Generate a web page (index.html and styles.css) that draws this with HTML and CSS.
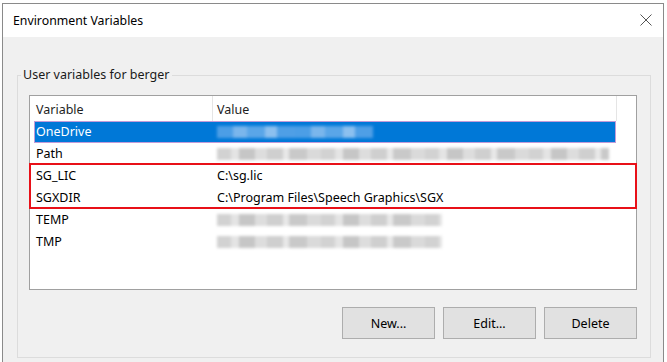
FILE: index.html
```html
<!DOCTYPE html>
<html lang="en">
<head>
    <meta charset="UTF-8">
    <title>Environment Variables</title>
    <link rel="stylesheet" href="styles.css">
</head>
<body>
    <div class="window">
        <div class="titlebar">
            <span class="title">Environment Variables</span>
            <svg class="close" width="12" height="12" viewBox="0 0 12 12">
                <path d="M0.5 0.5 L11.5 11.5 M11.5 0.5 L0.5 11.5" stroke="#555" stroke-width="1" fill="none"/>
            </svg>
        </div>
        <div class="client">
            <fieldset class="group">
                <legend>User variables for berger</legend>
                <div class="listview">
                    <div class="lv-header">
                        <div class="hcol hcol-var">Variable</div>
                        <div class="hcol hcol-val">Value</div>
                    </div>
                    <div class="row selected">
                        <div class="cell-var">OneDrive</div>
                        <div class="cell-val"><span class="hidden-val light" style="width: 156px"></span></div>
                    </div>
                    <div class="row">
                        <div class="cell-var">Path</div>
                        <div class="cell-val"><span class="hidden-val" style="width: 392px"></span></div>
                    </div>
                    <div class="row">
                        <div class="cell-var">SG_LIC</div>
                        <div class="cell-val">C:\sg.lic</div>
                    </div>
                    <div class="row">
                        <div class="cell-var">SGXDIR</div>
                        <div class="cell-val">C:\Program Files\Speech Graphics\SGX</div>
                    </div>
                    <div class="row">
                        <div class="cell-var">TEMP</div>
                        <div class="cell-val"><span class="hidden-val" style="width: 225px"></span></div>
                    </div>
                    <div class="row">
                        <div class="cell-var">TMP</div>
                        <div class="cell-val"><span class="hidden-val" style="width: 225px"></span></div>
                    </div>
                    <!-- red annotation box -->
                    <div class="highlight"></div>
                </div>
                <div class="buttons">
                    <button>New...</button>
                    <button>Edit...</button>
                    <button>Delete</button>
                </div>
            </fieldset>
        </div>
    </div>
</body>
</html>
```

FILE: styles.css
```css
body {
    margin: 0;
    padding: 0;
    background-color: #ffffff;
    font-family: "Noto Sans", "Open Sans", sans-serif;
    font-size: 12.5px;
    color: #000;
    overflow: hidden;
}
.window {
    margin: 3px 3px 0 2px;
    border: 1px solid #8a8a8a;
    border-bottom: none;
    height: 362px;
    background-color: #f0f0f0;
}
.titlebar {
    background-color: #fff;
    height: 33px;
    display: flex;
    align-items: center;
    justify-content: space-between;
    padding: 0 11px 0 10px;
}
.title {
    font-size: 12.3px;
    color: #000;
}
.close {
    display: block;
    margin-top: -2px;
}
.client {
    padding: 30px 12px 0 14px;
}
.group {
    margin: 0;
    padding: 12px 13px 18px 11px;
    border: 1px solid #dcdcdc;
    min-width: 0;
}
.group legend {
    padding: 0 2px;
    margin-left: -8px;
    line-height: 16px;
    color: #1a1a1a;
}
.listview {
    position: relative;
    height: 193px;
    background-color: #fff;
    border: 1px solid #a0a0a0;
}
.lv-header {
    display: flex;
    height: 25px;
}
.hcol {
    padding-top: 3px;
    line-height: 22px;
    color: #1e1e1e;
}
.hcol-var {
    width: 176px;
    padding-left: 6px;
    border-right: 1px solid #e5e5e5;
}
.hcol-val {
    width: 399px;
    padding-left: 4px;
    border-right: 1px solid #e5e5e5;
}
.row {
    display: flex;
    height: 22px;
    line-height: 22px;
    margin-left: 4px;
    width: 582px;
    box-sizing: border-box;
}
.row.selected {
    background-color: #0078d7;
    color: #fff;
    outline: 1px solid #c29bd8;
    outline-offset: -1px;
}
.cell-var {
    width: 176px;
    padding-left: 2px;
}
.cell-val {
    padding-left: 5px;
    display: flex;
    align-items: center;
}
.hidden-val {
    display: block;
    height: 12px;
    filter: blur(1.6px);
    background: repeating-linear-gradient(90deg,
        #d2d2d2 0 14px, #e4e4e4 14px 22px, #c6c6c6 22px 38px,
        #dddddd 38px 50px, #cfcfcf 50px 66px, #e8e8e8 66px 72px,
        #c9c9c9 72px 90px, #dadada 90px 104px);
}
.hidden-val.light {
    background: repeating-linear-gradient(90deg,
        #4c9ee6 0 16px, #7ab6ec 16px 30px, #5aa6e8 30px 48px,
        #8cc0ef 48px 60px, #4f9fe6 60px 78px);
}
.highlight {
    position: absolute;
    left: -1px;
    top: 67px;
    width: 608px;
    height: 46px;
    box-sizing: border-box;
    border: 2px solid #e81018;
}
.buttons {
    display: flex;
    justify-content: flex-end;
    gap: 8px;
    margin-top: 17px;
}
.buttons button {
    width: 93px;
    height: 32px;
    background-color: #e1e1e1;
    border: 1px solid #adadad;
    font-family: inherit;
    font-size: 12.5px;
    color: #000;
    padding: 0;
}
```
